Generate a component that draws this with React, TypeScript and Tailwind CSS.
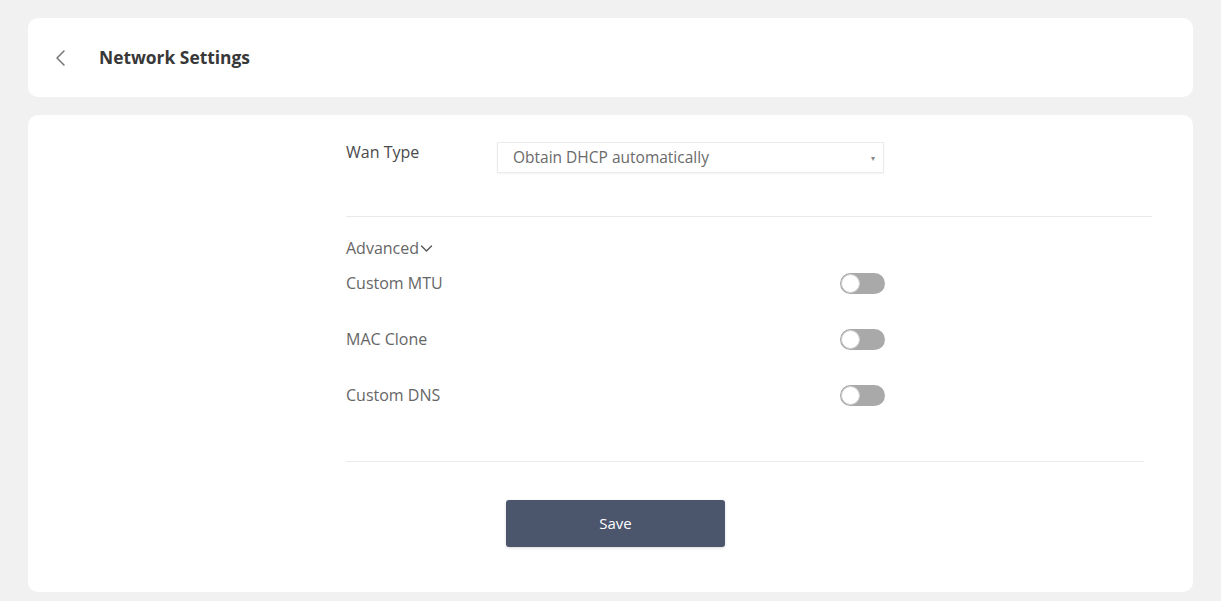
import React from "react";

function Toggle() {
  return (
    <div className="w-[45px] h-[21px] rounded-full bg-[#a9a9a9] flex items-center pl-[1px]">
      <div className="w-[19px] h-[19px] rounded-full bg-white border border-[#d0d0d0]" />
    </div>
  );
}

function Row({ label }: { label: string }) {
  return (
    <div className="h-[40px] w-[539px] flex items-center justify-between">
      <span className="text-[16px] text-[#666]">{label}</span>
      <Toggle />
    </div>
  );
}

export default function App() {
  return (
    <div
      className="min-h-[601px] bg-[#f1f1f1] px-[28px] pt-[18px] pb-[9px] flex flex-col gap-[18px]"
      style={{ fontFamily: '"Open Sans", "Noto Sans", sans-serif' }}
    >
      <div className="h-[79px] bg-white rounded-[10px] flex items-center pl-[26px]">
        <svg width="14" height="18" viewBox="0 0 14 18" fill="none" className="mr-[31px]">
          <path d="M10 2 L3 9 L10 16" stroke="#757575" strokeWidth="1.5" strokeLinecap="round" strokeLinejoin="round" />
        </svg>
        <span className="text-[17.4px] font-bold text-[#383838]">Network Settings</span>
      </div>

      <div className="h-[477px] bg-white rounded-[10px] pl-[318px] pt-[27px] flex flex-col">
        <div className="flex items-start">
          <span className="w-[151px] text-[16px] leading-[20px] text-[#4a4a4a]">Wan Type</span>
          <div className="w-[387px] h-[31px] border border-[#ebebeb] shadow-[0_1px_2px_rgba(0,0,0,0.05)] flex items-center justify-between pl-[15px] pr-[8px]">
            <span className="text-[15.5px] text-[#6a6a6a]">Obtain DHCP automatically</span>
            <span className="text-[8px] text-[#888]">▾</span>
          </div>
        </div>

        <div className="mt-[43px] w-[806px] h-px bg-[#e9e9e9]" />

        <div className="mt-[21px] h-[20px] flex items-center text-[16px] text-[#666]">
          Advanced
          <svg width="13" height="9" viewBox="0 0 13 9" fill="none" className="ml-[1px]">
            <path d="M1.5 2 L6.5 7 L11.5 2" stroke="#555" strokeWidth="1.4" strokeLinecap="round" strokeLinejoin="round" />
          </svg>
        </div>

        <div className="mt-[5px] flex flex-col gap-[16px]">
          <Row label="Custom MTU" />
          <Row label="MAC Clone" />
          <Row label="Custom DNS" />
        </div>

        <div className="mt-[46px] w-[798px] h-px bg-[#e9e9e9]" />

        <button className="mt-[38px] ml-[160px] w-[219px] h-[47px] bg-[#4b566d] rounded-[3px] text-white text-[15px] shadow-[0_1px_3px_rgba(0,0,0,0.15)]">
          Save
        </button>
      </div>
    </div>
  );
}
